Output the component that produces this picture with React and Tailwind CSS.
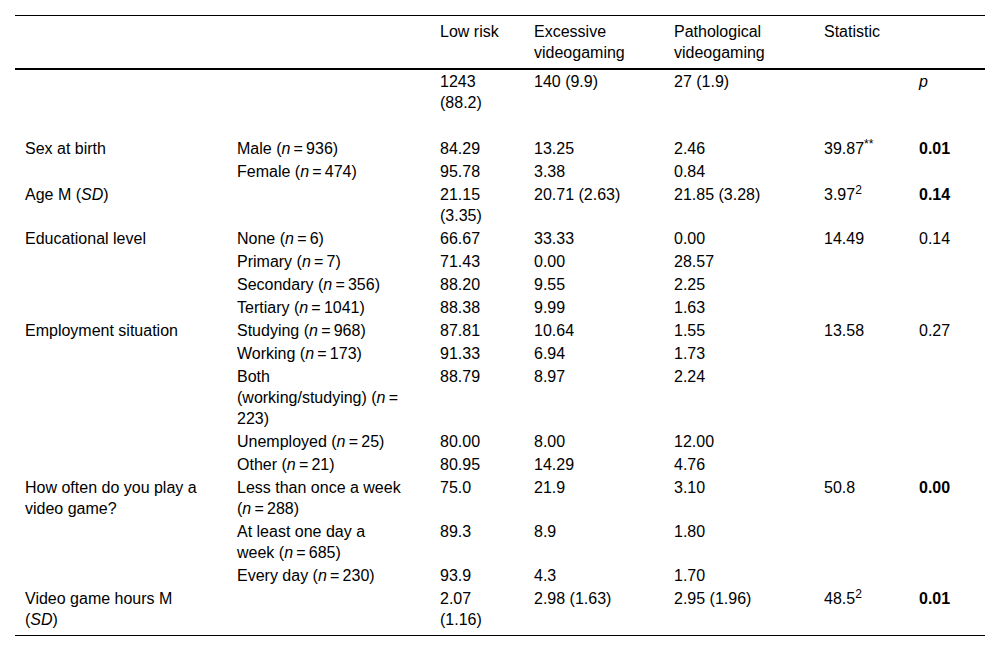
import React from "react";

const N = ({ v }) => (
  <>
    (<i>n</i>
    {"\u2009=\u2009"}
    {v})
  </>
);

const pad = [
  "pl-[10px] pr-[28px]",
  "pl-[10px] pr-[28px]",
  "pl-[10px] pr-[18px]",
  "pl-[10px] pr-[28px]",
  "pl-[10px] pr-[28px]",
  "pl-[10px] pr-[10px]",
  "pl-[10px] pr-[10px]",
];

const header = ["", "", "Low risk", "Excessive videogaming", "Pathological videogaming", "Statistic", ""];

const rows = [
  ["", "", "1243 (88.2)", "140 (9.9)", "27 (1.9)", "", <i>p</i>],
  ["\u00a0", "", "", "", "", "", ""],
  ["Sex at birth", <>Male <N v="936" /></>, "84.29", "13.25", "2.46", <>39.87<sup>**</sup></>, <b>0.01</b>],
  ["", <>Female <N v="474" /></>, "95.78", "3.38", "0.84", "", ""],
  [<>Age M (<i>SD</i>)</>, "", "21.15 (3.35)", "20.71 (2.63)", "21.85 (3.28)", <>3.97<sup>2</sup></>, <b>0.14</b>],
  ["Educational level", <>None <N v="6" /></>, "66.67", "33.33", "0.00", "14.49", "0.14"],
  ["", <>Primary <N v="7" /></>, "71.43", "0.00", "28.57", "", ""],
  ["", <>Secondary <N v="356" /></>, "88.20", "9.55", "2.25", "", ""],
  ["", <>Tertiary <N v="1041" /></>, "88.38", "9.99", "1.63", "", ""],
  ["Employment situation", <>Studying <N v="968" /></>, "87.81", "10.64", "1.55", "13.58", "0.27"],
  ["", <>Working <N v="173" /></>, "91.33", "6.94", "1.73", "", ""],
  ["", <>Both (working/studying) <N v="223" /></>, "88.79", "8.97", "2.24", "", ""],
  ["", <>Unemployed <N v="25" /></>, "80.00", "8.00", "12.00", "", ""],
  ["", <>Other <N v="21" /></>, "80.95", "14.29", "4.76", "", ""],
  ["How often do you play a video game?", <>Less than once a week <N v="288" /></>, "75.0", "21.9", "3.10", "50.8", <b>0.00</b>],
  ["", <>At least one day a week <N v="685" /></>, "89.3", "8.9", "1.80", "", ""],
  ["", <>Every day <N v="230" /></>, "93.9", "4.3", "1.70", "", ""],
  [<>Video game hours M (<i>SD</i>)</>, "", "2.07 (1.16)", "2.98 (1.63)", "2.95 (1.96)", <>48.5<sup>2</sup></>, <b>0.01</b>],
];

export default function App() {
  return (
    <div
      className="min-h-screen bg-white pt-[15px] px-[15px] text-black text-[16px]"
      style={{ fontFamily: '"Liberation Sans", Arial, sans-serif' }}
    >
      <table className="w-[970px] table-fixed border-collapse border-t border-black">
        <colgroup>
          <col className="w-[212px]" />
          <col className="w-[203px]" />
          <col className="w-[94px]" />
          <col className="w-[140px]" />
          <col className="w-[150px]" />
          <col className="w-[95px]" />
          <col className="w-[76px]" />
        </colgroup>
        <thead>
          <tr>
            {header.map((h, i) => (
              <th
                key={i}
                className={`${pad[i]} pt-[5px] pb-[5px] align-top text-left font-normal leading-[21px] border-b-2 border-black`}
              >
                {h}
              </th>
            ))}
          </tr>
        </thead>
        <tbody>
          {rows.map((r, ri) => {
            const last = ri === rows.length - 1;
            return (
              <tr key={ri}>
                {r.map((c, ci) => (
                  <td
                    key={ci}
                    className={`${pad[ci]} align-top leading-[21px] pt-px ${
                      last ? "pb-[5px] border-b border-black" : "pb-px"
                    }`}
                  >
                    {c}
                  </td>
                ))}
              </tr>
            );
          })}
        </tbody>
      </table>
    </div>
  );
}
